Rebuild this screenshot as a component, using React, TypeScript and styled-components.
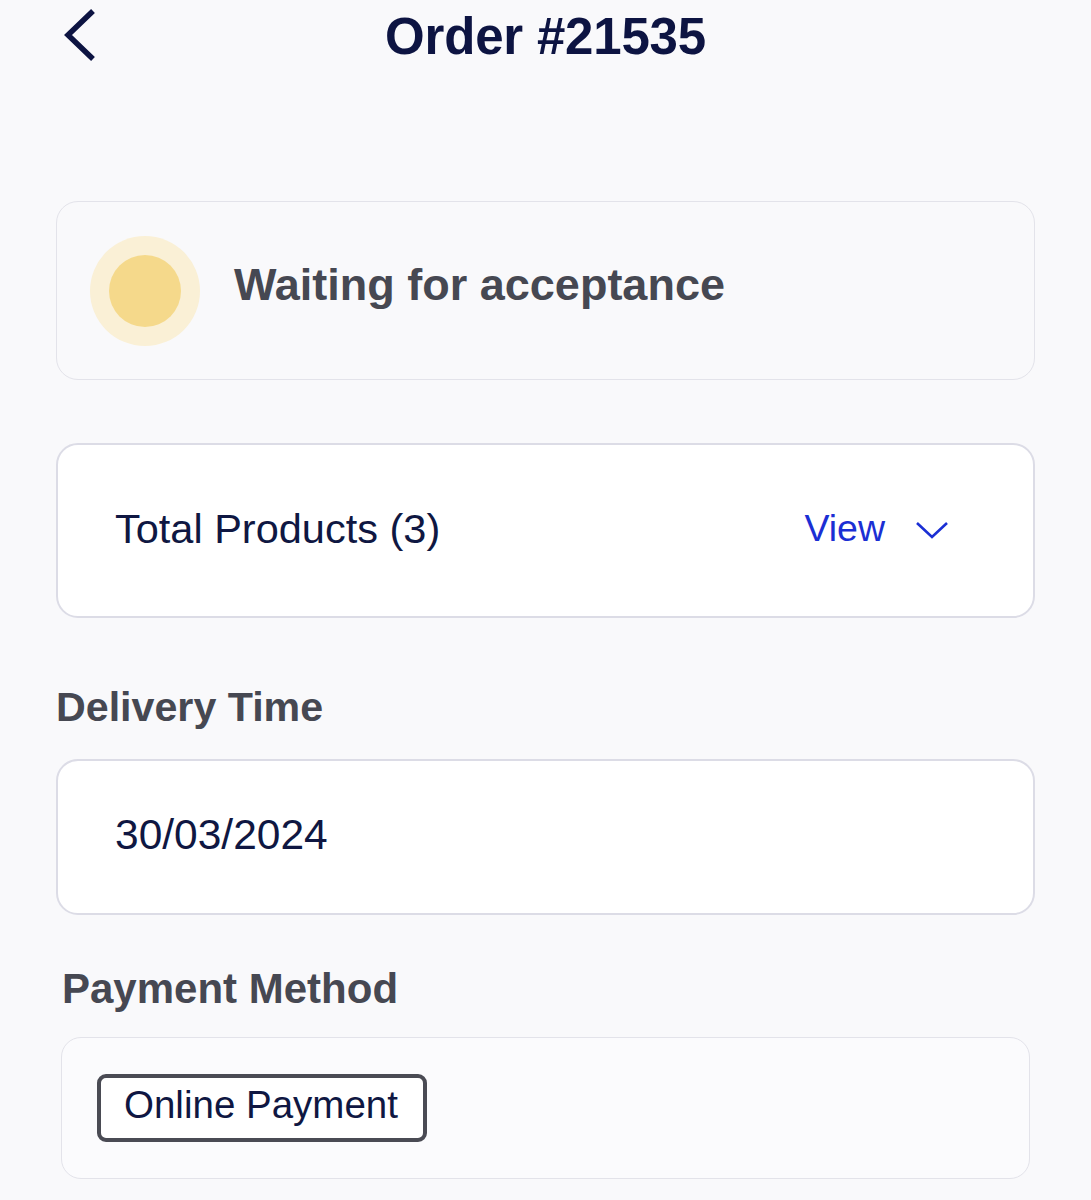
import styled, { createGlobalStyle } from "styled-components";

const GlobalStyle = createGlobalStyle`
  html, body {
    margin: 0;
    padding: 0;
    background: #f9f9fb;
  }
  body {
    font-family: "Liberation Sans", Arial, sans-serif;
  }
`;

const Page = styled.div`
  display: flex;
  flex-direction: column;
  padding: 0 56px 20px;
  min-height: 1200px;
  box-sizing: border-box;
`;

const Header = styled.header`
  display: grid;
  grid-template-columns: 1fr auto 1fr;
  align-items: center;
  height: 72px;
`;

const BackButton = styled.button`
  justify-self: start;
  display: flex;
  align-items: center;
  background: none;
  border: none;
  padding: 0;
  margin-left: 4px;
  margin-top: -2px;
  cursor: pointer;
`;

const Title = styled.h1`
  margin: 0;
  font-size: 51px;
  font-weight: 700;
  color: #0d1442;
  letter-spacing: -0.2px;
`;

const Card = styled.div<{ $height: number; $white?: boolean; $inset?: number }>`
  display: flex;
  align-items: center;
  box-sizing: border-box;
  height: ${(p) => p.$height}px;
  margin: 0 ${(p) => p.$inset ?? 0}px;
  background: ${(p) => (p.$white ? "#ffffff" : "#f9f9fb")};
  border: ${(p) => (p.$white ? "2px solid #dcdce6" : "1.5px solid #e3e3ea")};
  border-radius: 22px;
`;

const StatusCard = styled(Card)`
  margin-top: 129px;
  padding-left: 33px;
  gap: 34px;
`;

const StatusDot = styled.div`
  width: 110px;
  height: 110px;
  border-radius: 50%;
  background: #faf0d6;
  display: flex;
  align-items: center;
  justify-content: center;

  &::after {
    content: "";
    width: 72px;
    height: 72px;
    border-radius: 50%;
    background: #f5d98b;
  }
`;

const StatusText = styled.span`
  font-size: 45px;
  font-weight: 700;
  color: #464852;
  margin-top: -12px;
`;

const ProductsCard = styled(Card)`
  margin-top: 63px;
  padding: 0 84px 0 57px;
  justify-content: space-between;
`;

const ValueText = styled.span<{ $size?: number }>`
  font-size: ${(p) => p.$size ?? 41.5}px;
  color: #0f1742;
  margin-top: -4px;
`;

const ViewToggle = styled.button`
  display: flex;
  align-items: center;
  gap: 30px;
  background: none;
  border: none;
  padding: 0;
  font-family: inherit;
  font-size: 37.5px;
  color: #1b2fd4;
  margin-top: -4px;
  cursor: pointer;
`;

const SectionLabel = styled.h2<{ $top: number; $bottom: number; $inset?: number; $size?: number }>`
  margin: ${(p) => p.$top}px 0 ${(p) => p.$bottom}px ${(p) => p.$inset ?? 0}px;
  font-size: ${(p) => p.$size ?? 42}px;
  line-height: 50px;
  font-weight: 700;
  color: #464852;
`;

const DateCard = styled(Card)`
  padding-left: 57px;
`;

const PaymentCard = styled(Card)`
  padding-left: 35px;
  border-radius: 20px;
  background: #fbfbfd;
`;

const MethodChip = styled.span`
  display: inline-flex;
  align-items: center;
  box-sizing: border-box;
  height: 68px;
  width: 330px;
  padding: 0 0 6px 23px;
  border: 4px solid #4a4b54;
  border-radius: 9px;
  background: #ffffff;
  font-size: 38.5px;
  color: #0f1742;
`;

export default function App() {
  return (
    <>
      <GlobalStyle />
      <Page>
        <Header>
          <BackButton aria-label="Back">
            <svg width="40" height="56" viewBox="0 0 40 56" fill="none">
              <path
                d="M33 4 L8 28 L33 52"
                stroke="#0d1442"
                strokeWidth="5.5"
                strokeLinejoin="miter"
              />
            </svg>
          </BackButton>
          <Title>Order #21535</Title>
          <div />
        </Header>

        <StatusCard $height={179}>
          <StatusDot />
          <StatusText>Waiting for acceptance</StatusText>
        </StatusCard>

        <ProductsCard $height={175} $white>
          <ValueText>Total Products (3)</ValueText>
          <ViewToggle>
            View
            <svg width="34" height="22" viewBox="0 0 34 22" fill="none">
              <path d="M2 5 L17 19 L32 5" stroke="#1b2fd4" strokeWidth="2.6" />
            </svg>
          </ViewToggle>
        </ProductsCard>

        <SectionLabel $top={64} $bottom={27} $size={41.2}>
          Delivery Time
        </SectionLabel>
        <DateCard $height={156} $white>
          <ValueText $size={42.5}>30/03/2024</ValueText>
        </DateCard>

        <SectionLabel $top={49} $bottom={23} $inset={6}>
          Payment Method
        </SectionLabel>
        <PaymentCard $height={142} $inset={5}>
          <MethodChip>Online Payment</MethodChip>
        </PaymentCard>
      </Page>
    </>
  );
}
